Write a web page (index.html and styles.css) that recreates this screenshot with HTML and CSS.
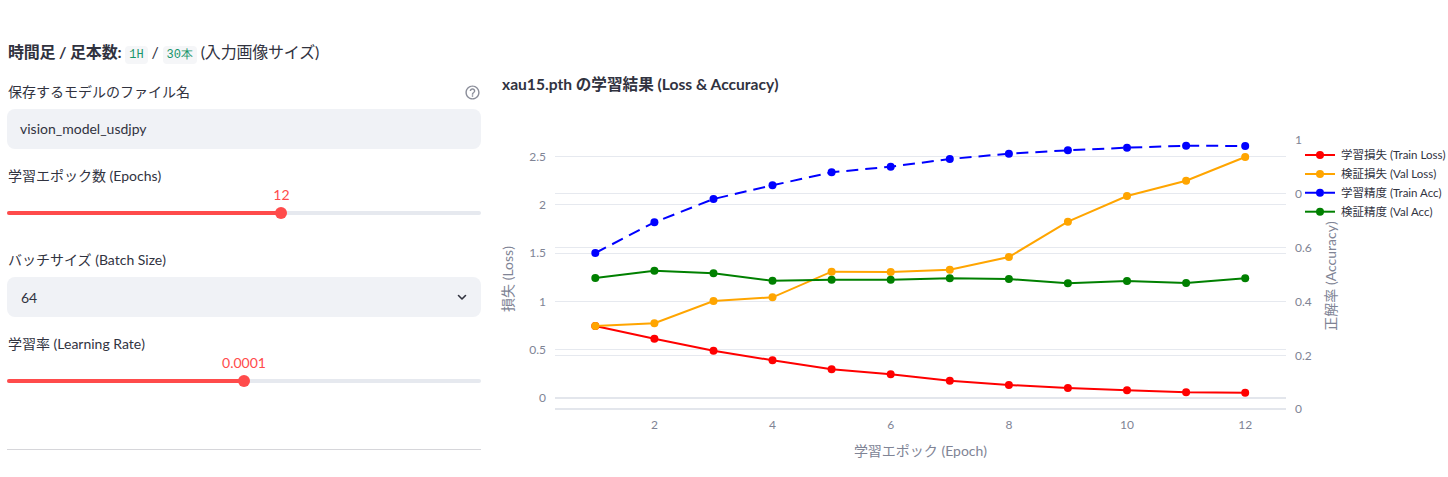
FILE: index.html
```html
<!DOCTYPE html>
<html>

  <head>
    <meta charset="utf-8">
    <title>学習設定</title>
    <link rel="stylesheet" href="styles.css">
  </head>

  <body>
    <div id="main">
      <div id="settings">
        <div class="heading">
          <b>時間足 / 足本数:</b> <code>1H</code> / <code>30本</code> (入力画像サイズ)
        </div>

        <div class="label first">
          <span>保存するモデルのファイル名</span>
          <svg class="help" width="17" height="17" viewBox="0 0 24 24">
            <path fill="#8a8d99" d="M11 18h2v-2h-2v2zm1-16C6.48 2 2 6.48 2 12s4.48 10 10 10 10-4.480 10-10S17.52 2 12 2zm0 18c-4.41 0-8-3.59-8-8s3.59-8 8-8 8 3.59 8 8-3.590 8-8 8zm0-14c-2.21 0-4 1.79-4 4h2c0-1.1.9-2 2-2s2 .9 2 2c0 2-3 1.75-3 5h2c0-2.25 3-2.5 3-5 0-2.21-1.79-4-4-4z"/>
          </svg>
        </div>
        <div class="textbox">vision_model_usdjpy</div>

        <div class="label">学習エポック数 (Epochs)</div>
        <div class="slider">
          <div class="slider-value-row">
            <span class="slider-value" style="left: 57.9%">12</span>
          </div>
          <div class="track">
            <div class="fill" style="width: 57.9%"></div>
            <div class="thumb" style="left: 57.9%"></div>
          </div>
        </div>

        <div class="label spaced">バッチサイズ (Batch Size)</div>
        <div class="select">
          <span>64</span>
          <svg width="10" height="7" viewBox="0 0 10 7">
            <path d="M1.5 1.5 L5 5 L8.5 1.5" fill="none" stroke="#31333f" stroke-width="1.6" stroke-linecap="round" stroke-linejoin="round"/>
          </svg>
        </div>

        <div class="label">学習率 (Learning Rate)</div>
        <div class="slider">
          <div class="slider-value-row">
            <span class="slider-value" style="left: 50%">0.0001</span>
          </div>
          <div class="track">
            <div class="fill" style="width: 50%"></div>
            <div class="thumb" style="left: 50%"></div>
          </div>
        </div>

        <div class="divider"></div>
      </div>

      <div id="chart">
        <svg width="951" height="477" viewBox="497 0 951 477">
          <text class="chart-title" x="502" y="90">xau15.pth の学習結果 (Loss &amp; Accuracy)</text>

          <!-- grid: left axis (loss) -->
          <g class="grid">
            <line x1="555" x2="1286" y1="156.5" y2="156.5"/>
            <line x1="555" x2="1286" y1="204.5" y2="204.5"/>
            <line x1="555" x2="1286" y1="253.5" y2="253.5"/>
            <line x1="555" x2="1286" y1="301.5" y2="301.5"/>
            <line x1="555" x2="1286" y1="349.5" y2="349.5"/>
          </g>
          <!-- grid: right axis (accuracy) -->
          <g class="grid">
            <line x1="555" x2="1286" y1="193.5" y2="193.5"/>
            <line x1="555" x2="1286" y1="247.5" y2="247.5"/>
            <line x1="555" x2="1286" y1="355.5" y2="355.5"/>
          </g>
          <g class="zeroline">
            <line x1="555" x2="1286" y1="398" y2="398"/>
            <line x1="555" x2="1286" y1="409" y2="409"/>
          </g>

          <g class="tick" text-anchor="end">
            <text x="546" y="160.5">2.5</text>
            <text x="546" y="208.5">2</text>
            <text x="546" y="257">1.5</text>
            <text x="546" y="305.5">1</text>
            <text x="546" y="353.5">0.5</text>
            <text x="546" y="402">0</text>
          </g>
          <g class="tick">
            <text x="1295" y="144">1</text>
            <text x="1295" y="198">0.8</text>
            <text x="1295" y="252">0.6</text>
            <text x="1295" y="305.5">0.4</text>
            <text x="1295" y="359.5">0.2</text>
            <text x="1295" y="413">0</text>
          </g>
          <g class="tick" text-anchor="middle">
            <text x="654.4" y="429">2</text>
            <text x="772.5" y="429">4</text>
            <text x="890.7" y="429">6</text>
            <text x="1008.9" y="429">8</text>
            <text x="1127" y="429">10</text>
            <text x="1245.2" y="429">12</text>
          </g>

          <text class="axis-title" x="920.5" y="456" text-anchor="middle">学習エポック (Epoch)</text>
          <text class="axis-title" transform="translate(513 279) rotate(-90)" text-anchor="middle">損失 (Loss)</text>
          <text class="axis-title" transform="translate(1336 276) rotate(-90)" text-anchor="middle">正解率 (Accuracy)</text>

          <!-- 学習損失 -->
          <g class="trace" stroke="#ff0000" fill="#ff0000">
            <polyline points="595.3,326 654.4,338.7 713.5,350.7 772.5,360.3 831.6,369.3 890.7,374.3 949.8,380.7 1008.9,385 1067.9,388 1127,390.3 1186.1,392.3 1245.2,392.7"/>
            <circle cx="595.3" cy="326" r="4"/><circle cx="654.4" cy="338.7" r="4"/><circle cx="713.5" cy="350.7" r="4"/>
            <circle cx="772.5" cy="360.3" r="4"/><circle cx="831.6" cy="369.3" r="4"/><circle cx="890.7" cy="374.3" r="4"/>
            <circle cx="949.8" cy="380.7" r="4"/><circle cx="1008.9" cy="385" r="4"/><circle cx="1067.9" cy="388" r="4"/>
            <circle cx="1127" cy="390.3" r="4"/><circle cx="1186.1" cy="392.3" r="4"/><circle cx="1245.2" cy="392.7" r="4"/>
          </g>
          <!-- 検証損失 -->
          <g class="trace" stroke="#ffa500" fill="#ffa500">
            <polyline points="595.3,326 654.4,323.3 713.5,301 772.5,297.3 831.6,271.7 890.7,272 949.8,269.7 1008.9,257 1067.9,221.7 1127,196 1186.1,180.7 1245.2,157"/>
            <circle cx="595.3" cy="326" r="4"/><circle cx="654.4" cy="323.3" r="4"/><circle cx="713.5" cy="301" r="4"/>
            <circle cx="772.5" cy="297.3" r="4"/><circle cx="831.6" cy="271.7" r="4"/><circle cx="890.7" cy="272" r="4"/>
            <circle cx="949.8" cy="269.7" r="4"/><circle cx="1008.9" cy="257" r="4"/><circle cx="1067.9" cy="221.7" r="4"/>
            <circle cx="1127" cy="196" r="4"/><circle cx="1186.1" cy="180.7" r="4"/><circle cx="1245.2" cy="157" r="4"/>
          </g>
          <!-- 学習精度 -->
          <g class="trace" stroke="#0000ff" fill="#0000ff">
            <polyline class="dashed" points="595.3,253 654.4,222.3 713.5,199 772.5,185.3 831.6,172.3 890.7,166.7 949.8,159 1008.9,153.7 1067.9,150.3 1127,147.7 1186.1,145.7 1245.2,146"/>
            <circle cx="595.3" cy="253" r="4"/><circle cx="654.4" cy="222.3" r="4"/><circle cx="713.5" cy="199" r="4"/>
            <circle cx="772.5" cy="185.3" r="4"/><circle cx="831.6" cy="172.3" r="4"/><circle cx="890.7" cy="166.7" r="4"/>
            <circle cx="949.8" cy="159" r="4"/><circle cx="1008.9" cy="153.7" r="4"/><circle cx="1067.9" cy="150.3" r="4"/>
            <circle cx="1127" cy="147.7" r="4"/><circle cx="1186.1" cy="145.7" r="4"/><circle cx="1245.2" cy="146" r="4"/>
          </g>
          <!-- 検証精度 -->
          <g class="trace" stroke="#008000" fill="#008000">
            <polyline points="595.3,278 654.4,270.7 713.5,273.3 772.5,280.7 831.6,279.7 890.7,279.7 949.8,278.3 1008.9,279 1067.9,283.3 1127,281 1186.1,283 1245.2,278.3"/>
            <circle cx="595.3" cy="278" r="4"/><circle cx="654.4" cy="270.7" r="4"/><circle cx="713.5" cy="273.3" r="4"/>
            <circle cx="772.5" cy="280.7" r="4"/><circle cx="831.6" cy="279.7" r="4"/><circle cx="890.7" cy="279.7" r="4"/>
            <circle cx="949.8" cy="278.3" r="4"/><circle cx="1008.9" cy="279" r="4"/><circle cx="1067.9" cy="283.3" r="4"/>
            <circle cx="1127" cy="281" r="4"/><circle cx="1186.1" cy="283" r="4"/><circle cx="1245.2" cy="278.3" r="4"/>
          </g>

          <!-- legend -->
          <rect x="1302" y="146" width="146" height="76" fill="#ffffff"/>
          <g class="legend">
            <g class="trace" stroke="#ff0000" fill="#ff0000">
              <line x1="1305" x2="1335" y1="155" y2="155"/><circle cx="1320" cy="155" r="4"/>
            </g>
            <text x="1341" y="159">学習損失 (Train Loss)</text>
            <g class="trace" stroke="#ffa500" fill="#ffa500">
              <line x1="1305" x2="1335" y1="174" y2="174"/><circle cx="1320" cy="174" r="4"/>
            </g>
            <text x="1341" y="178">検証損失 (Val Loss)</text>
            <g class="trace" stroke="#0000ff" fill="#0000ff">
              <line class="dashed" x1="1305" x2="1335" y1="192.7" y2="192.7"/><circle cx="1320" cy="192.7" r="4"/>
            </g>
            <text x="1341" y="196.7">学習精度 (Train Acc)</text>
            <g class="trace" stroke="#008000" fill="#008000">
              <line x1="1305" x2="1335" y1="211.7" y2="211.7"/><circle cx="1320" cy="211.7" r="4"/>
            </g>
            <text x="1341" y="215.7">検証精度 (Val Acc)</text>
          </g>
        </svg>
      </div>
    </div>
  </body>

</html>
```

FILE: styles.css
```css
body {
  margin: 0;
  background-color: #fff;
  color: #31333f;
  font-family: Lato, "Noto Sans CJK JP", sans-serif;
}

#main {
  display: flex;
  gap: 16px;
  padding-left: 7px;
  height: 477px;
  overflow: hidden;
}

#settings {
  flex: none;
  width: 474px;
}


.heading {
  margin-top: 40px;
  padding-left: 1px;
  height: 24px;
  font-size: 16px;
  line-height: 24px;
  letter-spacing: -0.2px;
  white-space: nowrap;
}

code {
  font-family: "Liberation Mono", monospace;
  font-size: 12px;
  line-height: 16px;
  color: #17956a;
  background-color: #f5f6f8;
  padding: 2px 4px;
  border-radius: 4px;
  letter-spacing: 0;
}


.label {
  display: flex;
  justify-content: space-between;
  align-items: center;
  margin-top: 17px;
  padding-left: 1px;
  height: 20px;
  font-size: 14px;
  line-height: 20px;
}

.label.first {
  margin-top: 18px;
}

.label.spaced {
  margin-top: 28px;
}

.help {
  display: block;
}

.textbox,
.select {
  margin-top: 7px;
  height: 40px;
  border-radius: 8px;
  background-color: #f0f2f6;
  font-size: 14px;
  box-sizing: border-box;
}

.textbox {
  padding-left: 13px;
  line-height: 40px;
}

.select {
  display: flex;
  justify-content: space-between;
  align-items: center;
  padding: 0 14px;
}

.select svg {
  display: block;
}


.slider {
  height: 36px;
}

.slider-value-row {
  position: relative;
  height: 18px;
}

.slider-value {
  position: absolute;
  top: 0;
  transform: translateX(-50%);
  color: #ff4b4b;
  font-size: 14px;
  line-height: 18px;
}

.track {
  position: relative;
  margin-top: 7px;
  height: 4px;
  border-radius: 2px;
  background-color: #e6e9ef;
}

.fill {
  height: 4px;
  border-radius: 2px;
  background-color: #ff4b4b;
}

.thumb {
  position: absolute;
  top: -4px;
  width: 12px;
  height: 12px;
  margin-left: -6px;
  border-radius: 50%;
  background-color: #ff4b4b;
}

.divider {
  margin-top: 59px;
  border-top: 1px solid #d6d6da;
}


#chart {
  flex: none;
  width: 951px;
}

#chart svg {
  display: block;
}

.chart-title {
  font-size: 15.6px;
  font-weight: 700;
  fill: #31333f;
}

.grid line {
  stroke: #e6e9ef;
  stroke-width: 1;
}

.zeroline line {
  stroke: #e3e6ec;
  stroke-width: 2;
}

.tick {
  font-size: 12px;
  fill: #808495;
}

.axis-title {
  font-size: 14px;
  fill: #808495;
}

.trace polyline,
.trace line {
  fill: none;
  stroke-width: 2;
}

.trace circle {
  stroke: none;
}

.dashed {
  stroke-dasharray: 12 7;
}

.legend text {
  font-size: 11.5px;
  fill: #31333f;
}
```
